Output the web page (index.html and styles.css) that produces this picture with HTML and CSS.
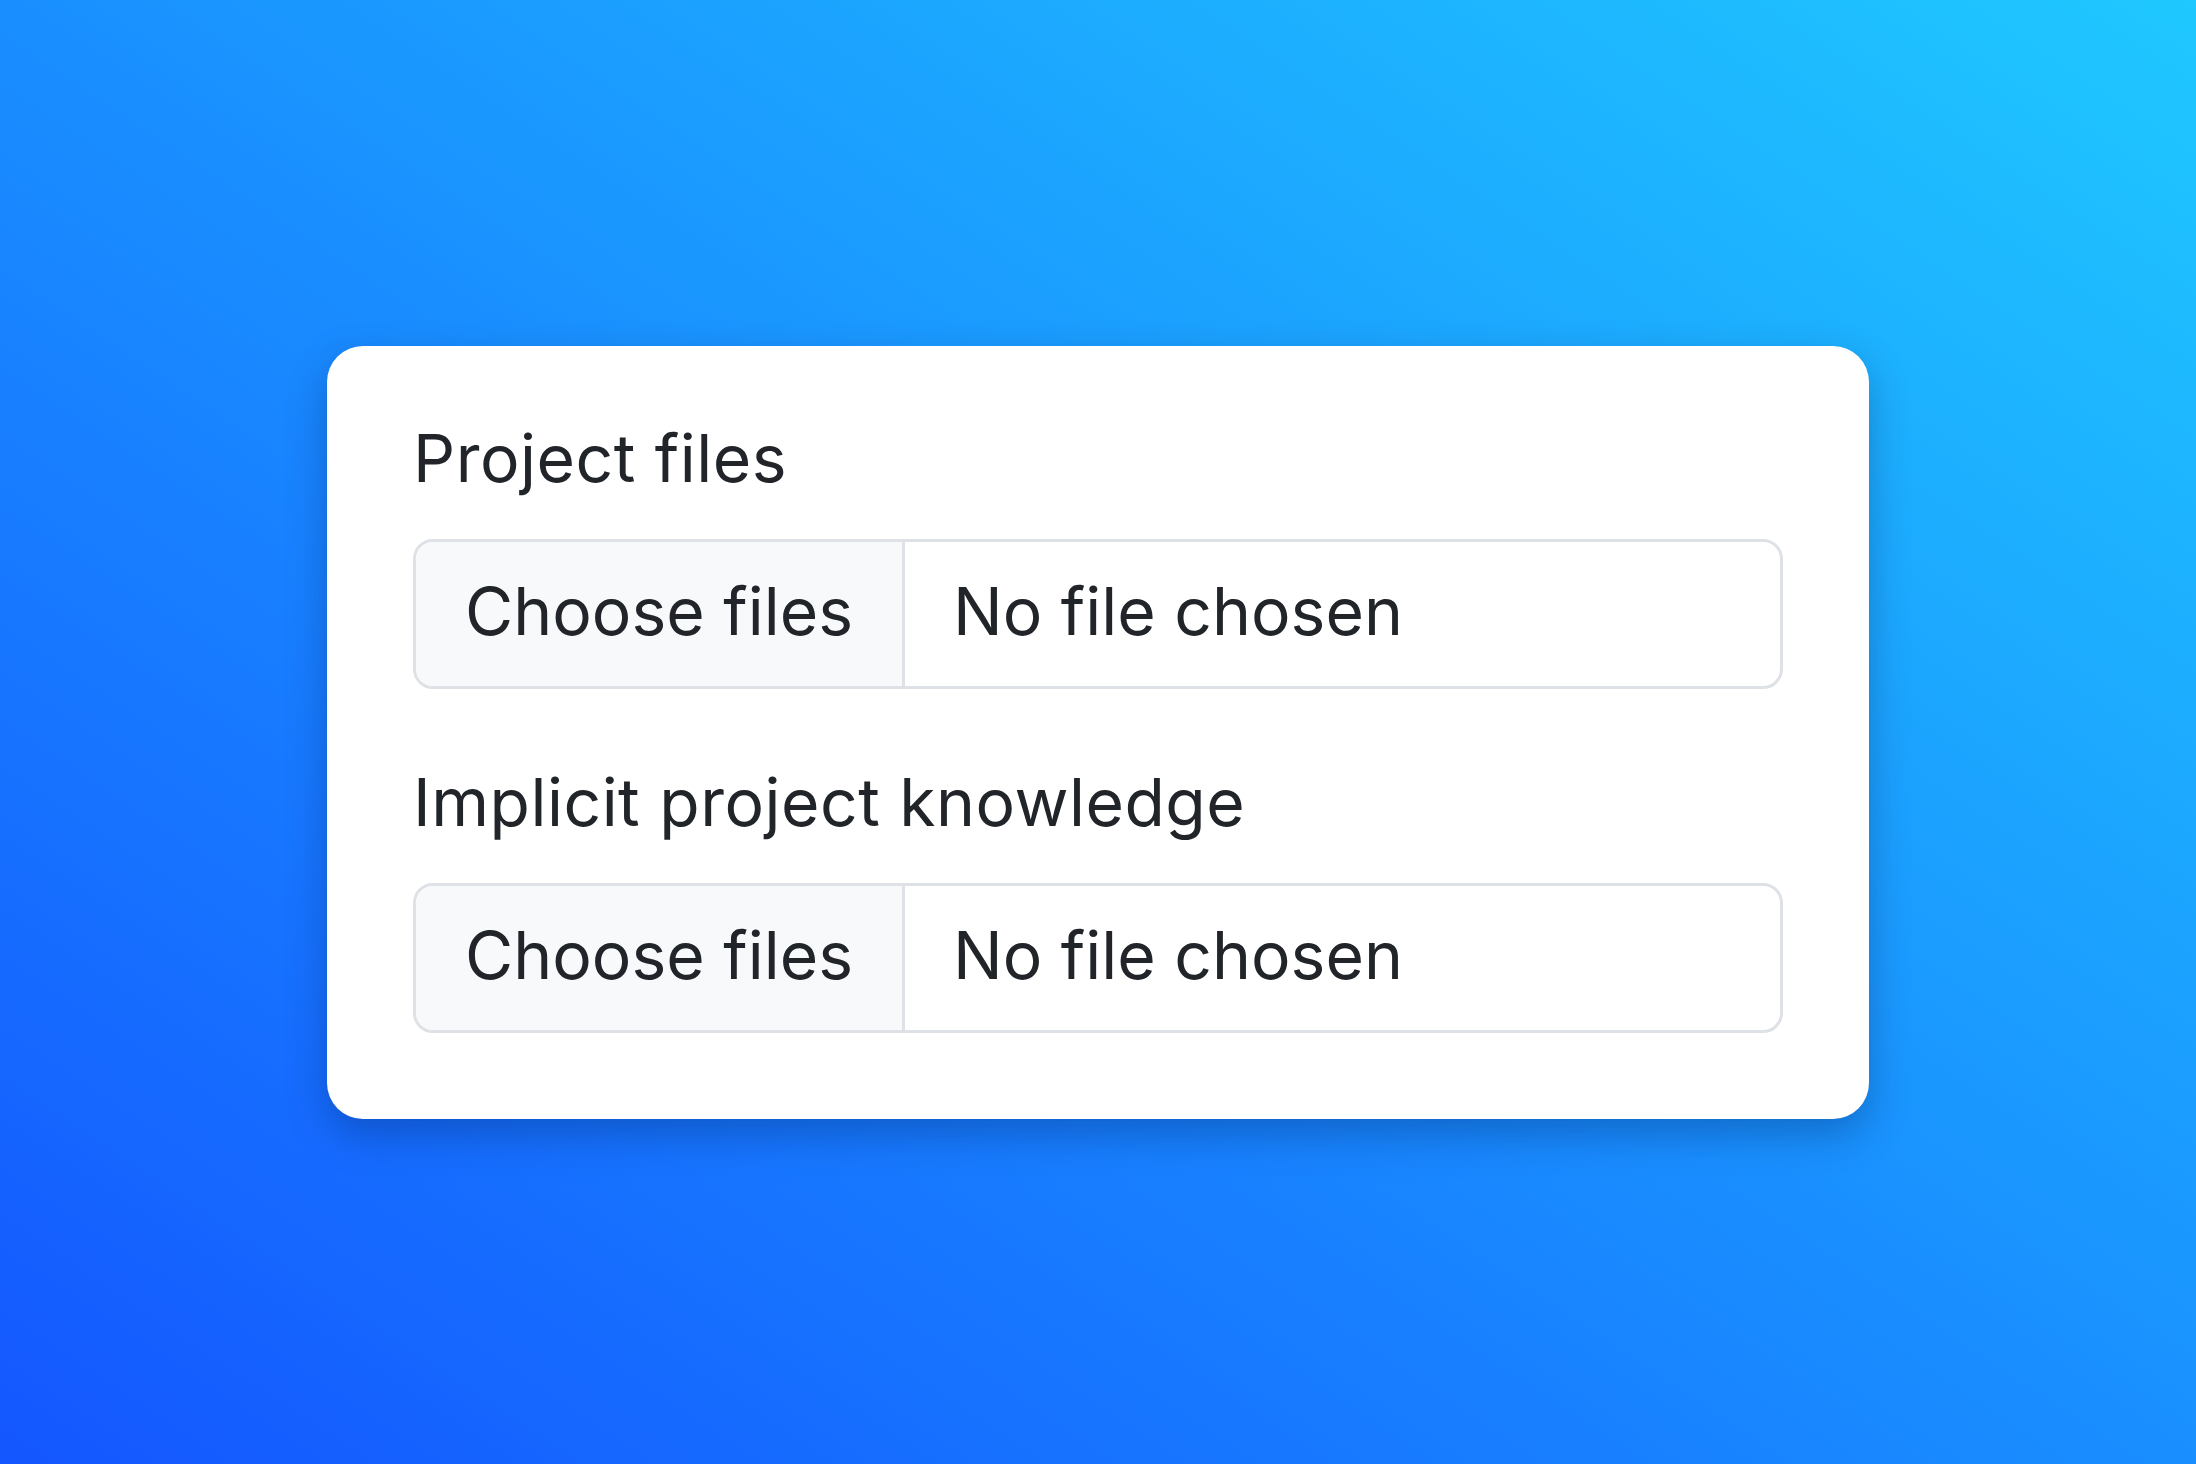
FILE: index.html
```html
<!DOCTYPE html>
<html lang="en">
<head>
  <meta charset="UTF-8">
  <title>Project upload</title>
  <link rel="stylesheet" href="styles.css">
</head>
<body>
  <div class="card">
    <div class="field">
      <p class="field-label">Project files</p>
      <label class="file-input">
        <input type="file" multiple>
        <span class="file-btn">Choose files</span>
        <span class="file-name">No file chosen</span>
      </label>
    </div>

    <div class="field">
      <p class="field-label">Implicit project knowledge</p>
      <label class="file-input">
        <input type="file" multiple>
        <span class="file-btn">Choose files</span>
        <span class="file-name">No file chosen</span>
      </label>
    </div>
  </div>
</body>
</html>
```

FILE: styles.css
```css
body {
  font-family: 'Inter', 'Liberation Sans', sans-serif;
  margin: 0;
  background: linear-gradient(to top right, #1456ff, #1fc8ff);
  display: flex;
  justify-content: center;
  align-items: center;
  height: 100vh;
  color: #212529;
}

.card {
  background-color: #fff;
  border-radius: 36px;
  padding: 72px 86px 86px;
  box-shadow: 0 16px 40px rgba(0, 30, 90, 0.32);
  width: 1542px;
  box-sizing: border-box;
}

.field + .field {
  margin-top: 73px;
}

.field-label {
  margin: 0 0 41px;
  font-size: 66px;
  line-height: 80px;
  letter-spacing: 0.5px;
}

.file-input {
  display: flex;
  align-items: stretch;
  height: 150px;
  box-sizing: border-box;
  border: 3px solid #dee2e6;
  border-radius: 20px;
  overflow: hidden;
  font-size: 66px;
  cursor: pointer;
}

.file-input input {
  display: none;
}

.file-btn {
  display: flex;
  align-items: center;
  padding: 0 49px 5px;
  background-color: #f8f9fa;
  border-right: 3px solid #dee2e6;
}

.file-name {
  display: flex;
  align-items: center;
  padding: 0 0 5px 48px;
}
```
